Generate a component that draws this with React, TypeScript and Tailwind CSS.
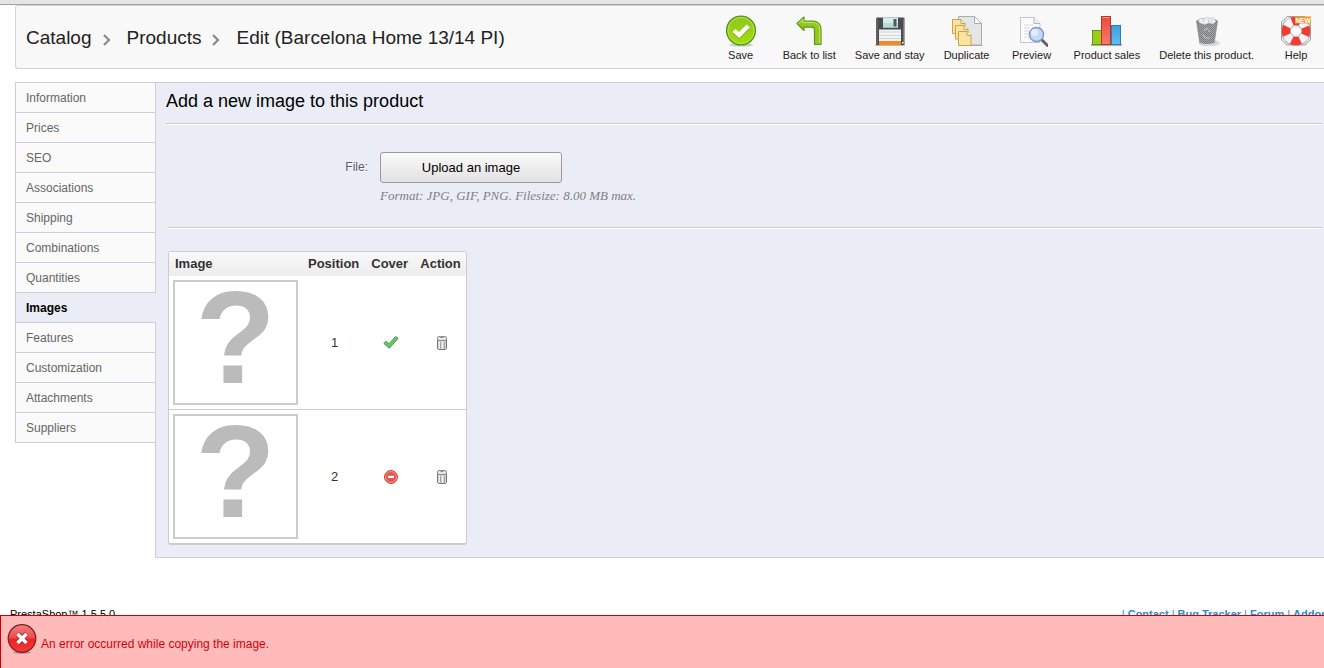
import type { ReactNode } from 'react';

function SaveIcon() {
  return (
    <svg width="32" height="32" viewBox="0 0 32 32">
      <defs>
        <linearGradient id="save-green" x1="0" y1="0" x2="0" y2="1">
          <stop offset="0" stopColor="#8fc61e" />
          <stop offset="1" stopColor="#a5dc10" />
        </linearGradient>
      </defs>
      <ellipse cx="16" cy="30" rx="12" ry="1.6" fill="#bbb" opacity="0.7" />
      <circle cx="16" cy="15.5" r="14.4" fill="url(#save-green)" stroke="#4f9a12" strokeWidth="1.3" />
      <circle cx="16" cy="15.5" r="13" fill="none" stroke="#b9e25a" strokeWidth="1" />
      <path d="M9.5 17l4.8 4.3 8.6-9" fill="none" stroke="#6d9c14" strokeWidth="4.6" opacity="0.5" />
      <path d="M9 15.5l5.2 4.6 9-9" fill="none" stroke="#fff" strokeWidth="4.2" />
    </svg>
  );
}

function BackIcon() {
  return (
    <svg width="32" height="32" viewBox="0 0 32 32">
      <path
        d="M4 8.500L11 2v4.200h8.500c5.500 0 8.500 3.500 8.500 8V29.500h-6.500V15.500c0-2-1-3.300-3-3.300H11v3.300z"
        fill="#95c81c"
        stroke="#5a9a18"
        strokeWidth="1.2"
        strokeLinejoin="round"
      />
      <path d="M5.500 8.400L10 4.300v3.100h9.500c4.700 0 7.300 3 7.300 6.800V28" fill="none" stroke="#c9e873" strokeWidth="1" />
    </svg>
  );
}

function SaveAndStayIcon() {
  return (
    <svg width="32" height="32" viewBox="0 0 32 32">
      <path d="M1 30.500h30" stroke="#bbb" strokeWidth="1" />
      <path d="M3 2.500h26.500l1 1V30H2V3.500z" fill="#4a4c51" />
      <path d="M3 4v25M29.500 4v25" stroke="#75777b" strokeWidth="1" />
      <rect x="9" y="2.500" width="15" height="10" fill="#d3efec" />
      <rect x="9" y="8" width="15" height="4.500" fill="#b8dcda" />
      <rect x="19.500" y="4" width="3" height="7.500" fill="#55585c" />
      <rect x="5" y="14.500" width="22" height="15" fill="#f1f4f7" />
      <path d="M5 17h22" stroke="#c4d8e6" strokeWidth="1" />
      <path d="M5 20.500h22" stroke="#e8d3bd" strokeWidth="1" />
      <path d="M5 23.500h22" stroke="#c4d8e6" strokeWidth="1" />
      <rect x="5" y="26" width="22" height="4" fill="#f58a1f" />
      <rect x="28" y="27" width="1.500" height="1.500" fill="#fff" />
    </svg>
  );
}

function DuplicateIcon() {
  return (
    <svg width="32" height="32" viewBox="0 0 32 32">
      <path d="M8.500 30.500h23" stroke="#aaa" strokeWidth="1" />
      <path d="M7.500 1.500h16l7 7V30h-23z" fill="#e3e6e6" stroke="#a9adae" />
      <path d="M23.500 1.500v7h7z" fill="#fff" stroke="#a9adae" />
      <g fill="#fbe3a0" stroke="#c9a24a">
        <path d="M1.500 4.500h8.500l4 4v10h-12.500z" />
        <path d="M10 4.500v4h4" fill="#fff6d8" />
        <path d="M4.500 10.500h8.500l4 4v9.500h-12.500z" />
        <path d="M13 10.500v4h4" fill="#fff6d8" />
        <path d="M7.500 16.500h8.500l4 4v10h-12.500z" />
        <path d="M16 16.500v4h4" fill="#fff6d8" />
      </g>
    </svg>
  );
}

function PreviewIcon() {
  return (
    <svg width="32" height="32" viewBox="0 0 32 32">
      <path d="M4.500 2.500h13.500l6 6V27.500h-19.500z" fill="#fbfbfb" stroke="#c3c5c8" />
      <path d="M18 2.500v6h6" fill="#eee" stroke="#b4b6b8" />
      <path d="M8 10h9M8 13h6M8 16h5M8 19h5M8 22h6" stroke="#d5dae0" />
      <path d="M25.500 24.500l6 6" stroke="#5f6164" strokeWidth="3" strokeLinecap="round" />
      <circle cx="20.500" cy="19.500" r="7" fill="#c4d9f5" stroke="#7d9bc8" strokeWidth="1.500" />
      <circle cx="18.500" cy="17.500" r="3.500" fill="#e2eefc" />
    </svg>
  );
}

function SalesIcon() {
  return (
    <svg width="32" height="32" viewBox="0 0 32 32">
      <defs>
        <linearGradient id="sales-red" x1="0" y1="0" x2="0" y2="1">
          <stop offset="0" stopColor="#ea4b3a" />
          <stop offset="1" stopColor="#fa7a6c" />
        </linearGradient>
        <linearGradient id="sales-blue" x1="0" y1="0" x2="0" y2="1">
          <stop offset="0" stopColor="#3d9fdf" />
          <stop offset="1" stopColor="#64bdf0" />
        </linearGradient>
      </defs>
      <path d="M0 30h31" stroke="#666" strokeWidth="1" />
      <rect x="1.500" y="15.500" width="9" height="14" fill="#9ccb1b" stroke="#5d9715" />
      <rect x="20.500" y="10.500" width="9" height="19" fill="url(#sales-blue)" stroke="#2a7fb8" />
      <rect x="10.500" y="1.500" width="9" height="28" fill="url(#sales-red)" stroke="#c03326" />
      <path d="M11.500 2.500h7" stroke="#f59a8f" />
    </svg>
  );
}

function BinIcon() {
  return (
    <svg width="32" height="32" viewBox="0 0 32 32">
      <defs>
        <pattern id="bin-mesh" width="2" height="2" patternUnits="userSpaceOnUse">
          <rect width="2" height="2" fill="#a3a5a7" />
          <rect width="1" height="1" fill="#77797c" />
          <rect x="1" y="1" width="1" height="1" fill="#7d7f82" />
        </pattern>
      </defs>
      <ellipse cx="21" cy="28" rx="8" ry="3" fill="#bbb" opacity="0.5" />
      <path d="M5.500 6l3.500 23c3 2 11 2 14 0L26.500 6z" fill="url(#bin-mesh)" stroke="#8b8d90" strokeWidth="0.800" />
      <path d="M8.800 27.500c4 2 10.500 2 14.500 0l-.3 2.200c-4 2-10 2-14 0z" fill="#d7d9da" />
      <ellipse cx="16" cy="6.500" rx="10.500" ry="3.500" fill="#88898b" />
      <path d="M7 6l3-3 3 1 3-2 3 1.500 3-1 3 4-3 2.500-4-1-4 1.500-4-1z" fill="#f0f1f2" stroke="#b8babc" strokeWidth="0.600" />
      <path d="M11 5l3 2M17 4l1 4M22 4l-2 3" stroke="#c5c7c9" />
      <path d="M13 16l3-3 3 4M12 19l2 4h5" fill="none" stroke="#c3c5c7" strokeWidth="1" />
    </svg>
  );
}

function HelpIcon() {
  return (
    <svg width="32" height="32" viewBox="0 0 32 32">
      <path
        d="M7 1.500h18l5.500 5.500v18l-5.500 5h-18l-5.500-5V7z"
        fill="#e9eaeb"
        stroke="#9fa3a6"
        strokeWidth="1"
        strokeLinejoin="round"
      />
      <circle cx="16" cy="16" r="10" fill="none" stroke="#8d9194" strokeWidth="9.600" />
      <circle cx="16" cy="16" r="10" fill="none" stroke="#f3f4f5" strokeWidth="8.600" />
      <circle
        cx="16"
        cy="16"
        r="10"
        fill="none"
        stroke="#f23c32"
        strokeWidth="8.600"
        strokeDasharray="8.700 7.008"
        strokeDashoffset="4.350"
      />
      <circle cx="16" cy="16" r="5.500" fill="#fafafa" stroke="#a9adb0" strokeWidth="0.800" />
      <rect x="15" y="1.500" width="16" height="7" fill="#f4952c" />
      <text x="23" y="7.500" fontSize="6.500" fontWeight="bold" textAnchor="middle" fill="#fff">
        NEW
      </text>
    </svg>
  );
}

function CheckIcon() {
  return (
    <svg width="16" height="16" viewBox="0 0 16 16">
      <path
        d="M.8 8.500l2.400-2.300 2.800 2.500L12.700 1.500l2.500 1.800L6.300 13.200z"
        fill="#6cc46a"
        stroke="#3f9040"
        strokeWidth="0.900"
        strokeLinejoin="round"
      />
    </svg>
  );
}

function ForbiddenIcon() {
  return (
    <svg width="16" height="16" viewBox="0 0 16 16">
      <circle cx="8" cy="8" r="6.500" fill="#e8574c" stroke="#c9463d" />
      <circle cx="8" cy="8" r="5.500" fill="none" stroke="#f59a90" strokeWidth="0.900" />
      <rect x="5" y="6.800" width="6" height="2.200" fill="#fff" />
    </svg>
  );
}

function TrashIcon() {
  return (
    <svg width="16" height="16" viewBox="0 0 16 16">
      <path d="M3.500 4.500h9v9l-1 1h-7l-1-1z" fill="#d2d2d2" stroke="#777" />
      <rect x="3.500" y="1.500" width="9" height="4" rx="1.500" fill="#e6e6e6" stroke="#8d8d8d" />
      <path d="M6.500 2.500h3" stroke="#8a8a8a" />
      <path d="M5.500 6.500v7M8.500 6.500v7" stroke="#f2f2f2" />
      <path d="M6.500 7v6.500M10.500 7v6.500" stroke="#a5a5a5" />
    </svg>
  );
}

function ErrorIcon() {
  return (
    <svg width="30" height="30" viewBox="0 0 30 30" className="shrink-0">
      <defs>
        <linearGradient id="error-red" x1="0" y1="0" x2="0" y2="1">
          <stop offset="0" stopColor="#f08080" />
          <stop offset="0.480" stopColor="#ee4a4a" />
          <stop offset="0.520" stopColor="#ee2222" />
          <stop offset="1" stopColor="#f23a3a" />
        </linearGradient>
      </defs>
      <ellipse cx="15" cy="28.500" rx="9" ry="1.200" fill="#8d5a5a" opacity="0.600" />
      <circle cx="15" cy="14.500" r="13.800" fill="url(#error-red)" stroke="#7c2020" strokeWidth="1.200" />
      <path d="M10.500 10l9 9M19.500 10l-9 9" stroke="#8c1a1a" strokeWidth="5" />
      <path d="M10.500 10l9 9M19.500 10l-9 9" stroke="#fff" strokeWidth="3.600" />
    </svg>
  );
}

const toolbar: { label: string; icon: ReactNode }[] = [
  { label: 'Save', icon: <SaveIcon /> },
  { label: 'Back to list', icon: <BackIcon /> },
  { label: 'Save and stay', icon: <SaveAndStayIcon /> },
  { label: 'Duplicate', icon: <DuplicateIcon /> },
  { label: 'Preview', icon: <PreviewIcon /> },
  { label: 'Product sales', icon: <SalesIcon /> },
  { label: 'Delete this product.', icon: <BinIcon /> },
  { label: 'Help', icon: <HelpIcon /> },
];

const tabs = [
  'Information',
  'Prices',
  'SEO',
  'Associations',
  'Shipping',
  'Combinations',
  'Quantities',
  'Images',
  'Features',
  'Customization',
  'Attachments',
  'Suppliers',
];

const images = [
  { position: 1, cover: true },
  { position: 2, cover: false },
];

const footerLinks = ['Contact', 'Bug Tracker', 'Forum', 'Addons'];

function Chevron() {
  return (
    <svg width="8" height="12" viewBox="0 0 8 12" className="mt-[2px]">
      <path d="M1 1l5 5-5 5" fill="none" stroke="#8a8a8a" strokeWidth="2.200" />
    </svg>
  );
}

function Header() {
  return (
    <header className="ml-[15px] flex h-16 items-center justify-between rounded-l-[3px] border-y border-l border-[#d3d3d3] bg-[#f8f8f8] pt-[3px] pl-[10px] pr-[5px]">
      <nav className="flex items-center whitespace-nowrap text-[19px] text-[#222]">
        <a href="#catalog">Catalog</a>
        <span className="pr-4 pl-[11px]">
          <Chevron />
        </span>
        <a href="#products">Products</a>
        <span className="pr-4 pl-[11px]">
          <Chevron />
        </span>
        <h1>Edit (Barcelona Home 13/14 PI)</h1>
      </nav>
      <ul className="flex gap-[19px]">
        {toolbar.map((item) => (
          <li key={item.label} className="min-w-[46px]">
            <a href="#action" className="flex flex-col items-center whitespace-nowrap text-[11px] leading-4 text-[#222]">
              {item.icon}
              {item.label}
            </a>
          </li>
        ))}
      </ul>
    </header>
  );
}

function Sidebar() {
  return (
    <ul className="w-[140px] shrink-0 self-start border-b border-l border-[#cccedb] text-xs">
      {tabs.map((tab) => (
        <li key={tab}>
          <a
            href="#tab"
            className={`block h-[30px] border-t border-[#cccedb] pl-[10px] leading-[30px] ${
              tab === 'Images'
                ? 'relative w-[140px] bg-[#eaedf5] font-bold text-black'
                : 'bg-[#fafafa] text-[#666]'
            }`}
          >
            {tab}
          </a>
        </li>
      ))}
    </ul>
  );
}

function ImageTable() {
  return (
    <table className="mt-[22px] ml-[2px] border-separate border-spacing-0 rounded-[3px] border border-b-2 border-[#ccc] bg-white text-[13px] text-[#333]">
      <thead>
        <tr className="h-6 bg-gradient-to-b from-[#f9f9f9] to-[#ececec] text-left">
          <th className="w-[133px] px-[6px]">Image</th>
          <th className="w-[63px] px-[6px]">Position</th>
          <th className="w-[49px] px-[6px]">Cover</th>
          <th className="w-[50px] pl-[6px] pr-[5px]">Action</th>
        </tr>
      </thead>
      <tbody>
        {images.map((image, index) => (
          <tr key={image.position} className="text-center">
            <td className={`p-1 ${index === 0 ? 'border-b border-[#ccc]' : ''}`}>
              <div className="h-[125px] w-[125px] border-2 border-[#ccc] text-[132px] leading-[112px] font-bold text-[#bbb]">
                ?
              </div>
            </td>
            <td className={`pl-[2px] ${index === 0 ? 'border-b border-[#ccc]' : ''}`}>{image.position}</td>
            <td className={`pl-[2px] ${index === 0 ? 'border-b border-[#ccc]' : ''}`}>
              <button type="button" aria-label="Cover" className="mx-auto block">
                {image.cover ? <CheckIcon /> : <ForbiddenIcon />}
              </button>
            </td>
            <td className={`pl-1 ${index === 0 ? 'border-b border-[#ccc]' : ''}`}>
              <button type="button" aria-label="Delete" className="mx-auto block">
                <TrashIcon />
              </button>
            </td>
          </tr>
        ))}
      </tbody>
    </table>
  );
}

function ImagesPanel() {
  return (
    <section className="min-w-0 flex-1 border-y border-l border-[#cccedb] bg-[#eaedf5] pr-[2px] pb-3 pl-[10px]">
      <h2 className="pt-1 text-lg leading-7 text-black">Add a new image to this product</h2>
      <hr className="mt-2 h-[2px] border-t border-b border-t-[#ccc] border-b-white" />
      <div className="flex gap-3 pt-[27px]">
        <label
          htmlFor="upload"
          className="w-[202px] pt-[7px] text-right text-xs text-[#585a69] [text-shadow:0_1px_0_#fff]"
        >
          File:
        </label>
        <div>
          <button
            id="upload"
            type="button"
            className="block h-[31px] w-[182px] rounded-[3px] border border-[#999] bg-gradient-to-b from-[#f9f9f9] to-[#e3e3e3] text-[13px] text-black"
          >
            Upload an image
          </button>
          <p className="pt-1 font-['Liberation_Serif',serif] text-[13px] leading-[18px] text-[#7f7f7f] italic">
            Format: JPG, GIF, PNG. Filesize: 8.00 MB max.
          </p>
        </div>
      </div>
      <hr className="mt-[22px] ml-[2px] h-[2px] border-t border-b border-t-[#ccc] border-b-white" />
      <ImageTable />
    </section>
  );
}

function Footer() {
  return (
    <footer className="flex justify-between overflow-hidden pt-12 pl-[10px] text-[11px] leading-4 text-black">
      <span>PrestaShop™ 1.5.5.0</span>
      <span className="-mr-[10px] flex gap-[3px] whitespace-nowrap font-bold text-[#268ccd]">
        {footerLinks.map((link) => (
          <span key={link} className="flex gap-[3px]">
            <span className="font-normal">|</span>
            <a href="#footer">{link}</a>
          </span>
        ))}
      </span>
    </footer>
  );
}

export default function App() {
  return (
    <div className="min-h-screen overflow-hidden bg-white font-['Liberation_Sans',Arial,sans-serif]">
      <div className="h-[5px] border-b border-[#a0a0a0] bg-[#e5e5e5]" />
      <Header />
      <main className="mt-[13px] ml-[15px] flex">
        <Sidebar />
        <ImagesPanel />
      </main>
      <Footer />
      <div
        role="alert"
        className="fixed inset-x-0 bottom-0 flex h-[53px] items-start gap-1 border-t border-l border-[#cc0000] bg-[#ffbaba] pt-2 pl-[6px] text-xs text-[#d8000c]"
      >
        <ErrorIcon />
        <p className="pt-3">An error occurred while copying the image.</p>
      </div>
    </div>
  );
}
